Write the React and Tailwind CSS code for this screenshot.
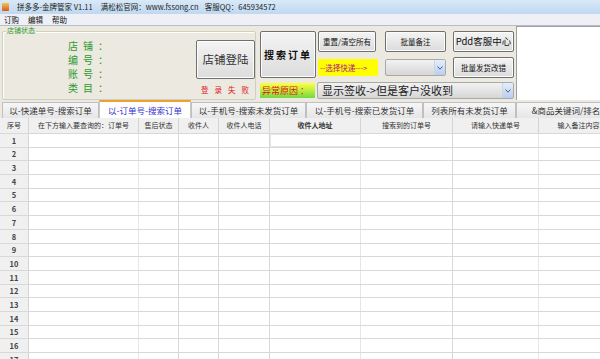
import React from "react";

const font = { fontFamily: '"Noto Sans CJK SC", "Liberation Sans", sans-serif' };

const cols = [
  { w: 29, t: "序号" },
  { w: 110, t: "在下方输入要查询的：订单号" },
  { w: 40, t: "售后状态" },
  { w: 40, t: "收件人" },
  { w: 51, t: "收件人电话" },
  { w: 91, t: "收件人地址", bold: true },
  { w: 92, t: "搜索到的订单号" },
  { w: 86, t: "请输入快递单号" },
  { w: 80, t: "输入备注内容" },
];

const tabs = [
  { t: "以-快递单号-搜索订单", w: 97 },
  { t: "以-订单号-搜索订单", w: 92, active: true },
  { t: "以-手机号-搜索未发货订单", w: 115 },
  { t: "以-手机号-搜索已发货订单", w: 117 },
  { t: "列表所有未发货订单", w: 93 },
  { t: "&商品关键词/排名", w: 100 },
];

const labels = ["店铺", "编号", "账号", "类目"];

function Btn({ className = "", children }) {
  return (
    <div
      className={`flex items-center justify-center whitespace-nowrap rounded-[2px] border border-[#707070] bg-gradient-to-b from-[#f4f4f4] to-[#dcdcdc] text-[#111] shadow-[inset_0_0_0_1px_#fcfcfc] ${className}`}
    >
      {children}
    </div>
  );
}

function Combo({ className = "", children }) {
  return (
    <div
      className={`flex items-stretch rounded-[2px] border border-[#a9a9a9] bg-gradient-to-b from-[#f2f2f2] to-[#d6d6d6] ${className}`}
    >
      <div className="flex flex-1 items-center overflow-hidden whitespace-nowrap pl-1">{children}</div>
      <div className="flex w-[11px] items-center justify-center border-l border-[#c8d6ea] bg-gradient-to-b from-[#e6eefb] to-[#b9cdf0]">
        <svg width="6" height="4" viewBox="0 0 6 4">
          <path d="M0.5 0.5 L3 3.2 L5.5 0.5" fill="none" stroke="#4a5f85" strokeWidth="1" />
        </svg>
      </div>
    </div>
  );
}

export default function App() {
  const rows = Array.from({ length: 17 }, (_, i) => i + 1);
  return (
    <div className="h-[359px] w-[600px] overflow-hidden bg-[#ece9e0] text-[8px]" style={font}>
      {/* title bar */}
      <div className="flex h-[14px] items-center bg-gradient-to-b from-[#d9e9f8] to-[#bfd8f0] pl-[2px] text-[7.5px] text-[#222]">
        <div className="mr-[8px] h-[8px] w-[7px] rounded-[1px] bg-gradient-to-b from-[#f6c24a] to-[#d9541e]" />
        <span className="leading-none">拼多多-金牌管家 V1.11</span>
        <span className="ml-[8px] leading-none">满松松官网：www.fssong.cn</span>
        <span className="ml-[6px] leading-none">客服QQ：645934572</span>
      </div>
      {/* menu */}
      <div className="flex h-[12px] items-center gap-[9px] border-b border-[#b5bccb] bg-[#eef0f5] pl-[4px] text-[7.5px] text-[#111]">
        <span className="leading-none">订购</span>
        <span className="leading-none">编辑</span>
        <span className="leading-none">帮助</span>
      </div>

      {/* top panel */}
      <div className="flex h-[74px]">
        <div className="relative ml-[2px] mt-[5px] h-[69px] w-[254px] rounded-[2px] border border-[#d0d0bf] shadow-[inset_1px_1px_0_#fff]">
          <span className="absolute left-[3px] top-[-5px] bg-[#ece9e0] px-[1px] text-[7px] leading-none text-[#2f9a2f]">店铺状态</span>
          <div className="flex h-full">
            <div className="ml-[65px] mt-[7px] flex w-[110px] flex-col text-[10px] leading-[14px] text-[#2f9a2f]">
              {labels.map((l) => (
                <span key={l} className="tracking-[5px]">
                  {l}：
                </span>
              ))}
            </div>
            <div className="ml-[18px] mt-[8px] flex flex-col items-center">
              <Btn className="h-[39px] w-[59px] border-[#5a7fae] text-[11.5px] text-[#333]">店铺登陆</Btn>
              <span className="mt-[7px] pl-[5px] text-[7.5px] leading-none tracking-[6px] text-[#e02020]">登录失败</span>
            </div>
          </div>
        </div>

        {/* middle */}
        <div className="ml-[2px] flex w-[258px] flex-col pt-[5px]">
          <div className="flex h-[47px]">
            <Btn className="ml-[2px] h-[47px] w-[56px] text-[10px] font-bold tracking-[2px]">搜索订单</Btn>
            <div className="ml-[2px] flex flex-col">
              <div className="flex h-[21px] items-start">
                <Btn className="h-[21px] w-[58px] text-[7.5px]">重置/清空所有</Btn>
                <Btn className="ml-[9px] h-[21px] w-[61px] text-[7.5px]">批量备注</Btn>
                <Btn className="ml-[7px] h-[21px] w-[61px] text-[9.5px]">Pdd客服中心</Btn>
              </div>
              <div className="mt-[5px] flex h-[21px] items-center">
                <div className="flex h-[17px] w-[60px] items-center whitespace-nowrap bg-[#ffff00] pl-[2px] text-[7.5px] text-[#b0108a]">--选择快递---&gt;</div>
                <Combo className="ml-[7px] h-[17px] w-[61px]" />
                <Btn className="ml-[7px] h-[21px] w-[61px] text-[7.5px]">批量发货改错</Btn>
              </div>
            </div>
          </div>
          <div className="mt-[4px] flex items-center">
            <div className="ml-[2px] flex h-[15px] w-[55px] items-center whitespace-pre bg-gradient-to-b from-[#ffff40] to-[#70d840] pl-[2px] text-[9px] text-[#e01010]">
              异常原因 ：
            </div>
            <Combo className="ml-[2px] h-[17px] w-[197px] text-[11px] text-[#222]">显示签收-&gt;但是客户没收到</Combo>
          </div>
        </div>

        <div className="flex-1 border-l border-t border-[#a0a0a0] bg-white" />
      </div>

      {/* tabs */}
      <div className="flex h-[18px] items-end bg-[#ece9e0] pl-[2px]">
        {tabs.map((t) => (
          <div
            key={t.t}
            style={{ width: t.w }}
            className={`flex shrink-0 items-center justify-center whitespace-nowrap border border-b-0 text-[8.5px] ${
              t.active
                ? "h-[18px] border-[#c8c8c8] border-t-2 border-t-[#f0a030] bg-white text-[#3030d0]"
                : "h-[16px] border-[#c0c0c0] bg-gradient-to-b from-[#f6f6f6] to-[#e6e6e6] text-[#333]"
            }`}
          >
            {t.t}
          </div>
        ))}
      </div>

      {/* table */}
      <div className="bg-white">
        <div className="flex h-[16px] border-b border-[#d8d8d8] bg-[#f0f0f0]">
          {cols.map((c) => (
            <div
              key={c.t}
              style={{ width: c.w }}
              className={`flex shrink-0 items-center justify-center overflow-hidden whitespace-nowrap border-r border-[#d4d4d4] text-[7px] text-[#333] ${
                c.bold ? "font-bold text-[#111]" : ""
              }`}
            >
              {c.t}
            </div>
          ))}
        </div>
        {rows.map((r) => (
          <div key={r} className="flex h-[13.7px] border-b border-[#d8d8d8]">
            {cols.map((c, i) => (
              <div
                key={c.t}
                style={{ width: c.w }}
                className={`flex shrink-0 items-center justify-center border-r ${
                  i === 0
                    ? "border-[#d4d4d4] bg-[#f0f0f0] text-[7.5px] font-bold text-[#444]"
                    : i === 1 || i === 5 || i === 7
                    ? "border-[#e6e6e6]"
                    : "border-[#d8d8d8]"
                } ${r === 1 && i === 5 ? "border border-[#555]" : ""}`}
              >
                {i === 0 ? r : null}
              </div>
            ))}
          </div>
        ))}
      </div>
    </div>
  );
}
